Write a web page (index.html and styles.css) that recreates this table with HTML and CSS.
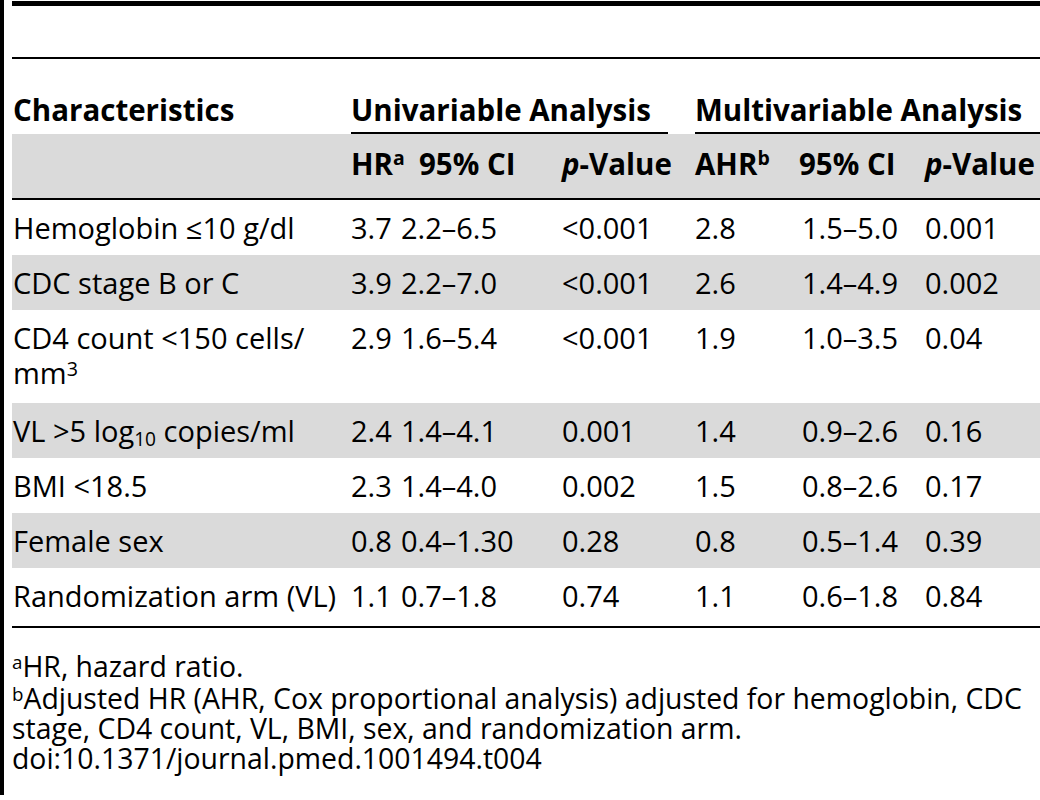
FILE: index.html
```html
<!DOCTYPE html>
<html>
<head>
<meta charset="utf-8">
<link rel="stylesheet" href="styles.css">
</head>
<body>
<div class="frame">
  <table class="data">
    <colgroup>
      <col class="c-name">
      <col class="c-hr">
      <col class="c-ci">
      <col class="c-p">
      <col class="c-ahr">
      <col class="c-ci2">
      <col class="c-p2">
    </colgroup>
    <thead>
      <tr class="title-row"><th colspan="7"></th></tr>
      <tr class="group-row">
        <th class="char">Characteristics</th>
        <th colspan="3"><div class="group uni">Univariable Analysis</div></th>
        <th colspan="3"><div class="group multi">Multivariable Analysis</div></th>
      </tr>
      <tr class="sub-row">
        <th></th>
        <th>HR<sup>a</sup></th>
        <th class="ci-first">95% CI</th>
        <th><i>p</i>-Value</th>
        <th>AHR<sup>b</sup></th>
        <th>95% CI</th>
        <th><i>p</i>-Value</th>
      </tr>
    </thead>
    <tbody>
      <tr><td>Hemoglobin ≤10 g/dl</td><td>3.7</td><td>2.2–6.5</td><td>&lt;0.001</td><td>2.8</td><td>1.5–5.0</td><td>0.001</td></tr>
      <tr class="shade"><td>CDC stage B or C</td><td>3.9</td><td>2.2–7.0</td><td>&lt;0.001</td><td>2.6</td><td>1.4–4.9</td><td>0.002</td></tr>
      <tr class="tall"><td>CD4 count &lt;150 cells/<wbr>mm<sup>3</sup></td><td>2.9</td><td>1.6–5.4</td><td>&lt;0.001</td><td>1.9</td><td>1.0–3.5</td><td>0.04</td></tr>
      <tr class="shade"><td>VL &gt;5 log<sub>10</sub> copies/ml</td><td>2.4</td><td>1.4–4.1</td><td>0.001</td><td>1.4</td><td>0.9–2.6</td><td>0.16</td></tr>
      <tr><td>BMI &lt;18.5</td><td>2.3</td><td>1.4–4.0</td><td>0.002</td><td>1.5</td><td>0.8–2.6</td><td>0.17</td></tr>
      <tr class="shade"><td>Female sex</td><td>0.8</td><td>0.4–1.30</td><td>0.28</td><td>0.8</td><td>0.5–1.4</td><td>0.39</td></tr>
      <tr class="last"><td>Randomization arm (VL)</td><td>1.1</td><td>0.7–1.8</td><td>0.74</td><td>1.1</td><td>0.6–1.8</td><td>0.84</td></tr>
    </tbody>
  </table>
  <div class="notes">
    <p><sup>a</sup>HR, hazard ratio.</p>
    <p><sup>b</sup>Adjusted HR (AHR, Cox proportional analysis) adjusted for hemoglobin, CDC stage, CD4 count, VL, BMI, sex, and randomization arm.</p>
    <p>doi:10.1371/journal.pmed.1001494.t004</p>
  </div>
</div>
</body>
</html>
```
FILE: styles.css
```css
html, body {
  margin: 0;
  padding: 0;
  background: #fff;
  overflow: hidden;
}

body {
  font-family: "Open Sans", "Noto Sans", sans-serif;
  color: #000;
  font-size: 29px;
}

.frame {
  border-left: 4px solid #000;
  padding: 1px 0 0 8px;
  height: 795px;
  box-sizing: border-box;
  width: 1200px;
}

.data {
  border-collapse: separate;
  border-spacing: 0;
  table-layout: fixed;
  width: 1150px;
  border-top: 5px solid #000;
}

.c-name { width: 339px; }
.c-hr { width: 50px; }
.c-ci { width: 161px; }
.c-p { width: 133px; }
.c-ahr { width: 104px; }
.c-ci2 { width: 126px; }
.c-p2 { width: 237px; }

th, td {
  text-align: left;
  padding: 0;
  line-height: 35px;
  white-space: nowrap;
  box-sizing: border-box;
}

th {
  font-weight: 700;
  font-size: 29.5px;
}

.title-row th {
  height: 53px;
  border-bottom: 2px solid #000;
}

.group-row th {
  height: 75px;
  vertical-align: bottom;
}

.group-row .char {
  padding: 0 0 7px 1px;
}

.group {
  padding-bottom: 5px;
  border-bottom: 2px solid #000;
}

.group.uni {
  margin-right: 27px;
}

.sub-row th {
  background: #dadada;
  height: 66px;
  border-bottom: 2px solid #000;
  vertical-align: middle;
  padding-bottom: 6px;
}

.sub-row .ci-first {
  padding-left: 18px;
}

td {
  padding: 10px 8px 10px 0;
  vertical-align: top;
}

td:first-child {
  padding-left: 1px;
  white-space: normal;
}

td:nth-child(6) {
  padding-left: 3px;
}

.tall td {
  padding-bottom: 13px;
}

.shade td {
  background: #dadada;
}

.last td {
  border-bottom: 2px solid #000;
  padding-bottom: 13px;
}

sup {
  font-size: 0.68em;
  line-height: 0;
  vertical-align: 0.42em;
}

sub {
  font-size: 0.66em;
  line-height: 0;
  vertical-align: -0.2em;
}

.sub-row sup {
  font-size: 0.66em;
  vertical-align: 0.5em;
}

.notes {
  width: 1034px;
  padding-top: 23px;
  font-size: 28.4px;
}

.notes p {
  margin: 0;
  line-height: 30px;
}

.notes p:first-child {
  margin-bottom: 2px;
}

.notes sup {
  font-size: 0.66em;
  vertical-align: 0.45em;
}
```
